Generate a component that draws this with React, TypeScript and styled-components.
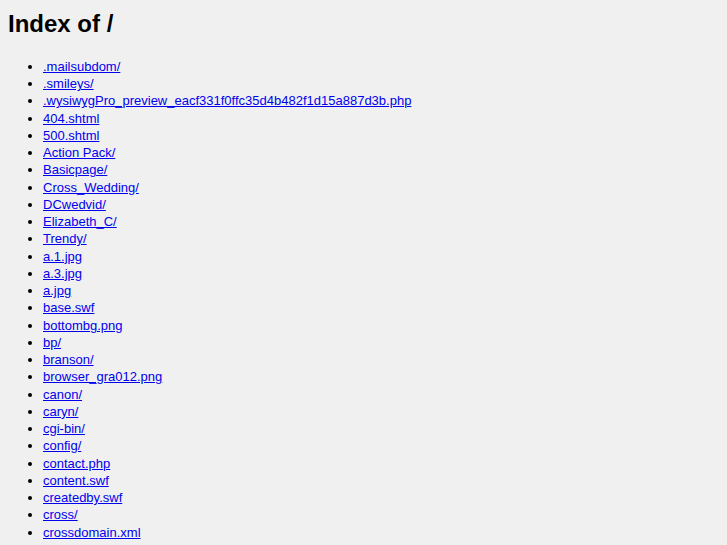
import React from "react";
import styled, { createGlobalStyle } from "styled-components";

const Global = createGlobalStyle`
  html, body { margin: 0; padding: 0; background: #f0f0f0; }
  body { margin: 8px; font-family: "Liberation Sans", Arial, sans-serif; color: #000; }
`;

const Title = styled.h1`
  font-size: 24px;
  font-weight: bold;
  margin: 2px 0 0 0;
  line-height: 1.2;
`;

const List = styled.ul`
  margin: 19px 0 0 0;
  padding-left: 35px;
  list-style: disc;
`;

const Item = styled.li`
  font-size: 13px;
  line-height: 17.25px;
`;

const Link = styled.a`
  color: #0000ee;
  text-decoration: underline;
`;

const files = [
  ".mailsubdom/",
  ".smileys/",
  ".wysiwygPro_preview_eacf331f0ffc35d4b482f1d15a887d3b.php",
  "404.shtml",
  "500.shtml",
  "Action Pack/",
  "Basicpage/",
  "Cross_Wedding/",
  "DCwedvid/",
  "Elizabeth_C/",
  "Trendy/",
  "a.1.jpg",
  "a.3.jpg",
  "a.jpg",
  "base.swf",
  "bottombg.png",
  "bp/",
  "branson/",
  "browser_gra012.png",
  "canon/",
  "caryn/",
  "cgi-bin/",
  "config/",
  "contact.php",
  "content.swf",
  "createdby.swf",
  "cross/",
  "crossdomain.xml",
  "css/",
];

export default function App() {
  return (
    <>
      <Global />
      <Title>Index of /</Title>
      <List>
        {files.map((f) => (
          <Item key={f}>
            <Link href={f}>{f}</Link>
          </Item>
        ))}
      </List>
    </>
  );
}
